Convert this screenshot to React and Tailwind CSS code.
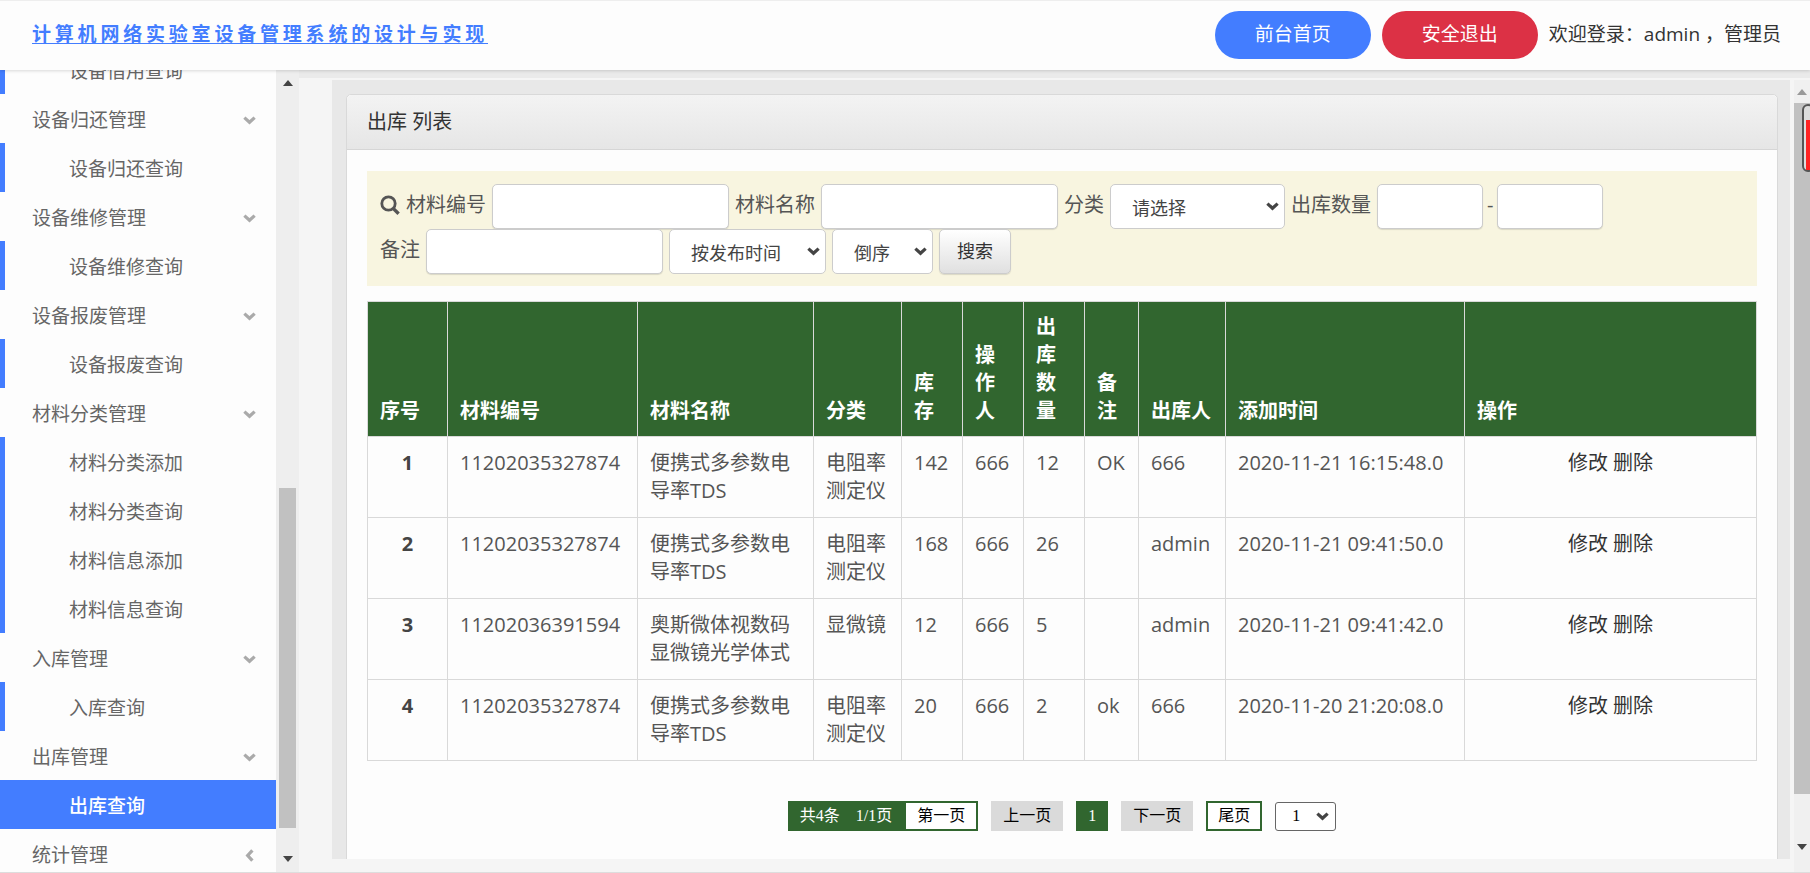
import React from "react";

const menu = [
  { label: "设备借用查询", sub: true },
  { label: "设备归还管理" },
  { label: "设备归还查询", sub: true },
  { label: "设备维修管理" },
  { label: "设备维修查询", sub: true },
  { label: "设备报废管理" },
  { label: "设备报废查询", sub: true },
  { label: "材料分类管理" },
  { label: "材料分类添加", sub: true },
  { label: "材料分类查询", sub: true },
  { label: "材料信息添加", sub: true },
  { label: "材料信息查询", sub: true },
  { label: "入库管理" },
  { label: "入库查询", sub: true },
  { label: "出库管理" },
  { label: "出库查询", sub: true, active: true },
  { label: "统计管理", closed: true },
];

const columns = [
  ["序号", "w-[80px]"],
  ["材料编号", "w-[190px]"],
  ["材料名称", "w-[176px]"],
  ["分类", "w-[88px]"],
  ["库存", "w-[61px]"],
  ["操作人", "w-[61px]"],
  ["出库数量", "w-[61px]"],
  ["备注", "w-[54px]"],
  ["出库人", "w-[87px]"],
  ["添加时间", "w-[239px]"],
  ["操作", ""],
];

const rows = [
  ["11202035327874", "便携式多参数电导率TDS", "电阻率测定仪", "142", "666", "12", "OK", "666", "2020-11-21 16:15:48.0"],
  ["11202035327874", "便携式多参数电导率TDS", "电阻率测定仪", "168", "666", "26", "", "admin", "2020-11-21 09:41:50.0"],
  ["11202036391594", "奥斯微体视数码显微镜光学体式", "显微镜", "12", "666", "5", "", "admin", "2020-11-21 09:41:42.0"],
  ["11202035327874", "便携式多参数电导率TDS", "电阻率测定仪", "20", "666", "2", "ok", "666", "2020-11-20 21:20:08.0"],
];

function Chevron({ className }) {
  return (
    <svg viewBox="0 0 14 10" className={className} fill="none" stroke="currentColor" strokeWidth="3.6" aria-hidden="true">
      <path d="M1.3 1.8 7 7 12.7 1.8" />
    </svg>
  );
}

function Triangle({ down, className }) {
  return (
    <svg viewBox="0 0 10 6" className={className} fill="currentColor" aria-hidden="true">
      <path d={down ? "M0 0H10L5 6Z" : "M0 6H10L5 0Z"} />
    </svg>
  );
}

function Scrollbar({ className, thumb, upColor }) {
  return (
    <div className={`flex shrink-0 flex-col items-center ${className}`} aria-hidden="true">
      <Triangle className={`h-[6px] w-[10px] shrink-0 ${upColor}`} />
      {thumb}
      <Triangle down className="h-[6px] w-[10px] shrink-0 text-[#444]" />
    </div>
  );
}

function Select({ label, options, className, selectClass, iconClass }) {
  return (
    <span className={`inline-grid items-center ${className}`}>
      <select
        aria-label={label}
        className={`col-start-1 row-start-1 h-full w-full appearance-none border bg-white ${selectClass}`}
      >
        {options.map((o) => (
          <option key={o}>{o}</option>
        ))}
      </select>
      <Chevron className={`pointer-events-none col-start-1 row-start-1 h-[9px] w-[13px] justify-self-end text-[#444] ${iconClass}`} />
    </span>
  );
}

const field = "h-[45px] rounded-[5px] border border-[#ccc] bg-white px-3 shadow-[0_1px_1px_rgba(0,0,0,0.12)]";
const searchSelect = "rounded-[5px] border-[#ccc] pl-[21px] pt-1 text-[18px] text-[#444]";

function Sidebar() {
  return (
    <aside className="flex shrink-0">
      <nav className="w-[276px] overflow-hidden bg-[#fdfdfd]">
        <ul className="-mt-[25px]">
          {menu.map((m) => (
            <li key={m.label}>
              <a
                href="#"
                className={`flex h-[49px] items-center justify-between pr-5 pt-[3px] text-[19px] ${
                  m.active
                    ? "border-l-[5px] border-[#437dff] bg-[#437dff] pl-[64px] font-medium text-white"
                    : m.sub
                      ? "border-l-[5px] border-[#437dff] pl-[64px] text-[#666]"
                      : "pl-8 text-[#666]"
                }`}
              >
                {m.label}
                {!m.sub && <Chevron className={`h-[9px] w-[13px] text-[#aaa] ${m.closed ? "rotate-90" : ""}`} />}
              </a>
            </li>
          ))}
        </ul>
      </nav>
      <Scrollbar
        className="w-[23px] bg-[#eeeeee] pb-[10px] pt-[10px]"
        upColor="text-[#444]"
        thumb={
          <div className="flex w-[17px] flex-1 flex-col pb-[28px]">
            <div className="flex-[403]" />
            <div className="flex-[341] bg-[#c1c1c1]" />
          </div>
        }
      />
    </aside>
  );
}

function SearchForm() {
  return (
    <form className="bg-[#f8f5e0] px-[13px] pb-3 pt-[13px]" onSubmit={(e) => e.preventDefault()}>
      <div className="flex items-center gap-[6px]">
        <label htmlFor="code" className="flex items-center gap-[6px] pb-[3px]">
          <svg viewBox="0 0 20 20" className="h-5 w-5" fill="none" stroke="#555" aria-hidden="true">
            <circle cx="8.5" cy="8.5" r="6.7" strokeWidth="2.8" />
            <path d="M13.2 13.4 18.6 18.8" strokeWidth="3.4" />
          </svg>
          材料编号
        </label>
        <input id="code" className={`w-[237px] ${field}`} />
        <label htmlFor="name" className="pb-[3px]">材料名称</label>
        <input id="name" className={`w-[237px] ${field}`} />
        <span className="pb-[3px]">分类</span>
        <Select label="分类" options={["请选择"]} className="h-[45px] w-[175px]" selectClass={searchSelect} iconClass="mr-[6px]" />
        <label htmlFor="min" className="pb-[3px]">出库数量</label>
        <div className="flex items-center gap-1">
          <input id="min" className={`w-[106px] ${field}`} />
          <span className="pb-[3px]">-</span>
          <input aria-label="出库数量上限" className={`w-[106px] ${field}`} />
        </div>
      </div>
      <div className="flex items-center gap-[6px]">
        <label htmlFor="note" className="pb-[3px]">备注</label>
        <input id="note" className={`w-[237px] ${field}`} />
        <Select label="排序字段" options={["按发布时间"]} className="h-[45px] w-[157px]" selectClass={searchSelect} iconClass="mr-[6px]" />
        <Select label="排序方式" options={["倒序"]} className="h-[45px] w-[101px]" selectClass={searchSelect} iconClass="mr-[6px]" />
        <button className="h-[45px] w-[72px] rounded-[5px] border border-[#ccc] bg-linear-to-b from-white to-[#e0e0e0] text-[18px] text-[#333] shadow-[0_1px_1px_rgba(0,0,0,0.12)]">
          搜索
        </button>
      </div>
    </form>
  );
}

function StockTable() {
  return (
    <table className="mt-[15px] w-full table-fixed border-collapse border border-[#d9d9d9] text-left leading-7">
      <thead>
        <tr className="bg-[#31662f] text-white">
          {columns.map(([name, width]) => (
            <th key={name} className={`border border-[#d9d9d9] px-3 pb-[11px] pt-[11px] align-bottom font-bold ${width}`}>
              {name}
            </th>
          ))}
        </tr>
      </thead>
      <tbody>
        {rows.map((row, i) => (
          <tr key={i}>
            <th className="border border-[#d9d9d9] px-3 py-3 text-center align-top font-bold text-[#444]">{i + 1}</th>
            {row.map((cell, j) => (
              <td key={j} className="border border-[#d9d9d9] py-3 pl-3 pr-2 align-top">
                {cell}
              </td>
            ))}
            <td className="border border-[#d9d9d9] p-3 text-center align-top text-[#333]">
              <a href="#">修改</a> <a href="#">删除</a>
            </td>
          </tr>
        ))}
      </tbody>
    </table>
  );
}

function Pagination() {
  return (
    <nav className="mt-10 flex items-center justify-center gap-[13px] pb-7 font-['Liberation_Serif','Noto_Sans_CJK_SC',serif] text-[16px] text-black">
      <div className="flex h-[30px] items-center border-2 border-[#31662f] bg-[#31662f] text-white">
        <span className="pl-[10px] pr-4">共4条</span>
        <span className="pr-[14px]">1/1页</span>
        <a href="#" className="flex h-full items-center bg-white px-[11px] text-black">
          第一页
        </a>
      </div>
      <a href="#" className="flex h-[30px] items-center bg-[#dadada] px-3">上一页</a>
      <a href="#" className="flex h-[30px] items-center bg-[#31662f] px-3 text-white">1</a>
      <a href="#" className="flex h-[30px] items-center bg-[#dadada] px-3">下一页</a>
      <a href="#" className="flex h-[30px] items-center border-2 border-[#31662f] bg-white px-[10px]">尾页</a>
      <Select label="页码" options={["1"]} className="h-[29px] w-[61px]" selectClass="rounded-[3px] border-[#666] pl-4" iconClass="mr-[7px]" />
    </nav>
  );
}

export default function App() {
  return (
    <div className="relative flex h-screen flex-col overflow-hidden border-b border-[#ddd] bg-[#f5f5f5] font-['Open_Sans','Noto_Sans_CJK_SC',sans-serif]">
      <header className="z-10 flex h-[70px] shrink-0 items-center justify-between border-t border-[#eee] bg-[#fdfdfd] pb-[2px] pl-8 pr-[29px] text-[19px] shadow-[0_1px_3px_rgba(0,0,0,0.15)]">
        <a href="#" className="font-bold tracking-[0.2em] text-[#437dff] underline underline-offset-2">
          计算机网络实验室设备管理系统的设计与实现
        </a>
        <div className="flex items-center gap-[11px] text-[#333]">
          <button className="h-12 w-[156px] rounded-full bg-[#437dff] text-white">前台首页</button>
          <button className="h-12 w-[156px] rounded-full bg-[#dc3145] text-white">安全退出</button>
          <p>欢迎登录：admin ，管理员</p>
        </div>
      </header>

      <div className="flex min-h-0 flex-1">
        <Sidebar />
        <div className="flex min-w-0 flex-1 flex-col border-t-8 border-[#eaeaea] pl-[33px] pt-[2px]">
          <div className="flex min-h-0 flex-1">
            <main className="mb-[13px] min-w-0 flex-1 overflow-hidden bg-[#e8e8e8] pl-[14px] pr-3 pt-[14px]">
              <section className="min-h-full rounded-t-[5px] border border-[#d9d9d9] bg-[#fdfdfd] text-[20px] text-[#555]">
                <h1 className="flex h-[55px] items-center rounded-t-[5px] border-b border-[#d6d6d6] bg-linear-to-b from-[#f3f3f3] to-[#e6e6e6] px-5 text-[20px] text-[#333]">
                  出库 列表
                </h1>
                <div className="px-5 pt-[21px]">
                  <SearchForm />
                  <StockTable />
                  <Pagination />
                </div>
              </section>
            </main>
            <Scrollbar
              className="ml-1 w-4 bg-[#f0f0f0] pb-[22px] pt-[9px]"
              upColor="text-[#999]"
              thumb={<div className="mb-[50px] mt-[8px] w-full flex-1 bg-[#c1c1c1]" />}
            />
          </div>
        </div>
      </div>

      <div className="absolute right-[-4px] top-[104px] h-[68px] w-3 rounded-md border-2 border-[#555] bg-[#ddd] pl-[2px] pt-[14px]" aria-hidden="true">
        <div className="h-full bg-[#f22]" />
      </div>
    </div>
  );
}
